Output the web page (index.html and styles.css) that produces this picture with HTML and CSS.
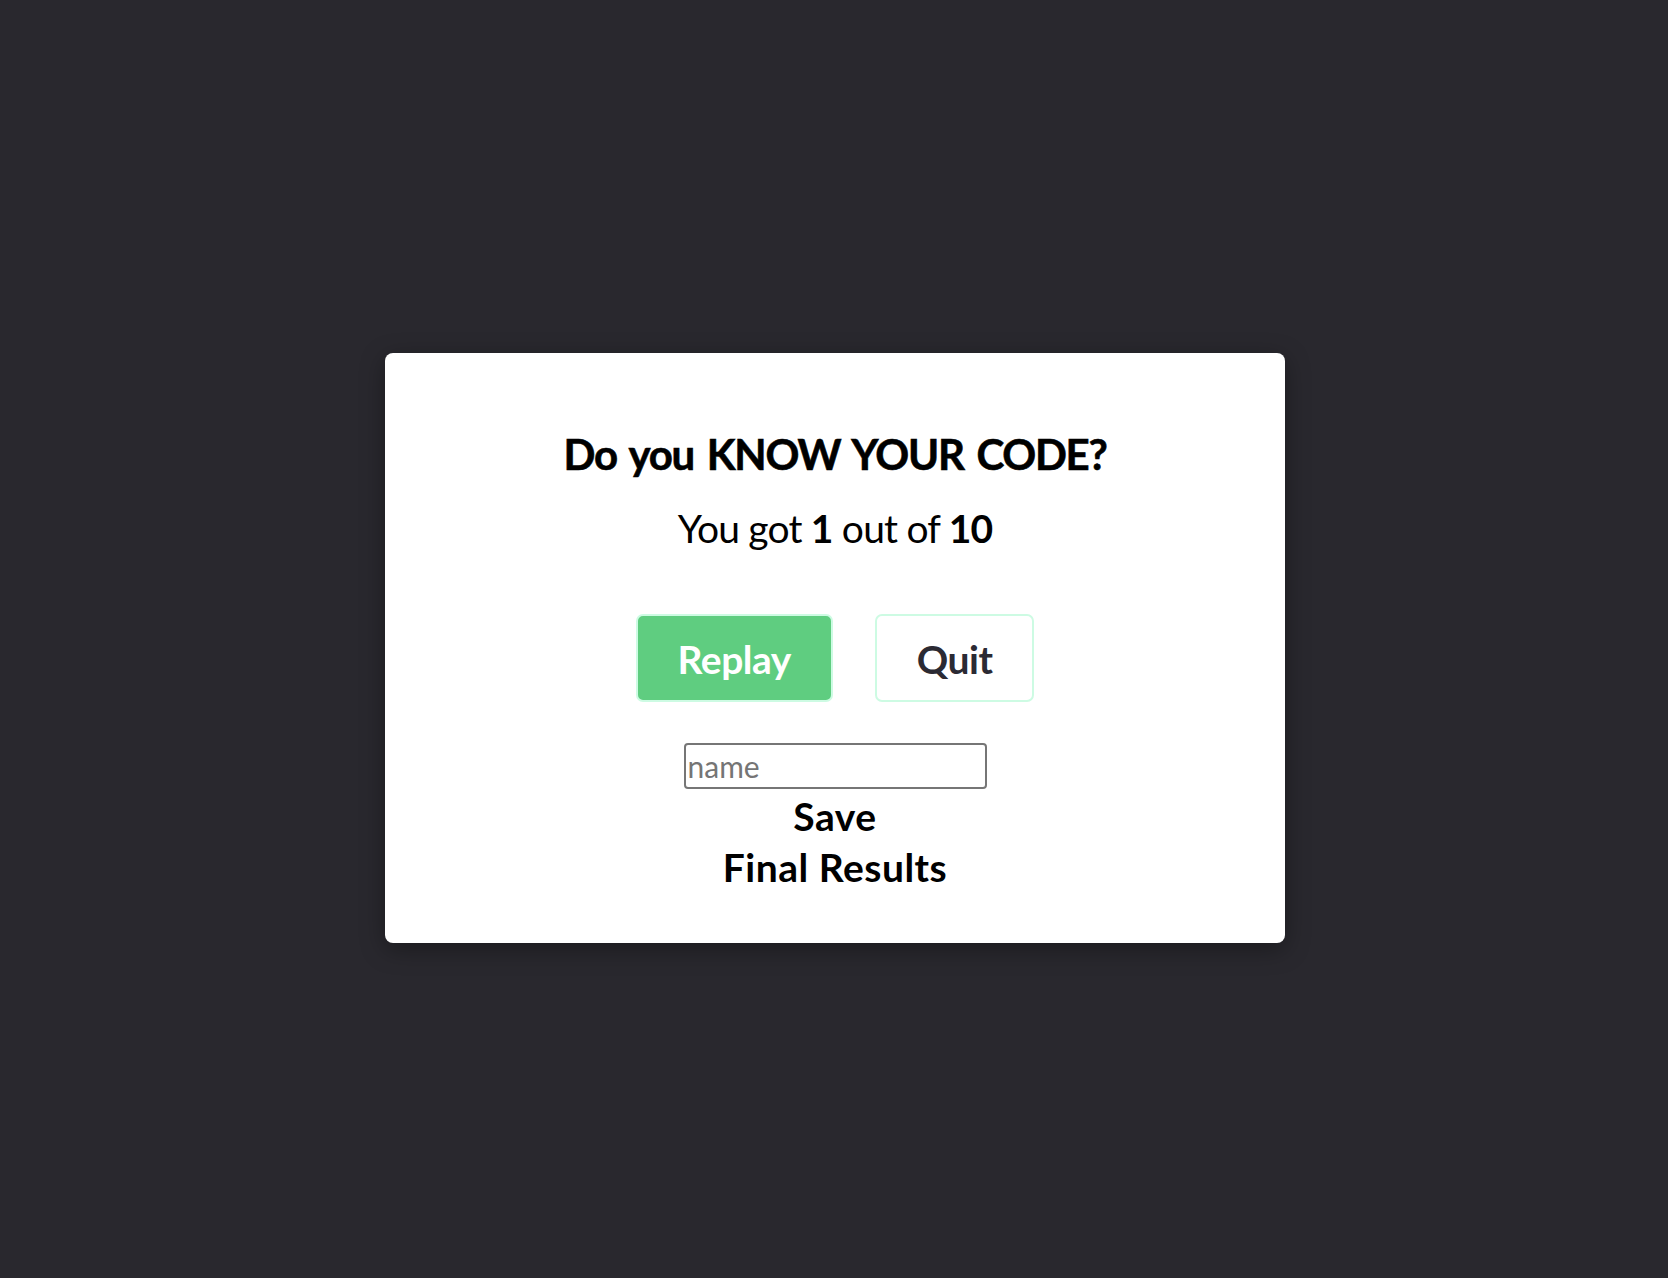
FILE: index.html
```html
<!DOCTYPE html>
<html lang="en">
<head>
<meta charset="utf-8">
<title>Do you KNOW YOUR CODE?</title>
<link rel="stylesheet" href="styles.css">
</head>
<body>
<div class="overlay">
  <div class="modal">
    <h2 class="title">Do you KNOW YOUR CODE?</h2>
    <p class="score">You got <strong>1</strong> out of <strong>10</strong></p>
    <div class="actions">
      <button class="btn btn-replay">Replay</button>
      <button class="btn btn-quit">Quit</button>
    </div>
    <form class="save-form">
      <input class="name-input" type="text" placeholder="name">
      <button class="save-btn" type="button">Save</button>
    </form>
    <h3 class="final">Final Results</h3>
  </div>
</div>
</body>
</html>
```
FILE: styles.css
```css
* { box-sizing: border-box; }
html, body {
  margin: 0;
  height: 100%;
}
body {
  background: #29282e;
  font-family: Lato, "Noto Sans", sans-serif;
  color: #000;
}
.overlay {
  min-height: 100%;
  display: flex;
  justify-content: center;
  align-items: flex-start;
  padding: 353px 0 0 2px;
}
.modal {
  width: 900px;
  height: 590px;
  background: #fff;
  border-radius: 8px;
  box-shadow: 0 6px 24px rgba(0, 0, 0, 0.35);
  display: flex;
  flex-direction: column;
  align-items: center;
  padding-top: 75px;
}
.title {
  margin: 0;
  font-size: 42px;
  line-height: 53px;
  font-weight: 700;
  letter-spacing: -1.3px;
  word-spacing: 4px;
  -webkit-text-stroke: 0.6px #000;
}
.score {
  margin: 23px 0 0;
  font-size: 39px;
  line-height: 48px;
  font-weight: 400;
  letter-spacing: -0.8px;
}
.score strong { font-weight: 700; }
.actions {
  display: flex;
  gap: 42px;
  margin-top: 62px;
}
.btn {
  height: 88px;
  padding: 2px 40px 0;
  border: 2px solid #cdfbe3;
  border-radius: 7px;
  font-family: inherit;
  font-size: 39px;
  line-height: 82px;
  font-weight: 700;
  letter-spacing: -0.5px;
  cursor: pointer;
}
.btn-replay {
  background: #5fcd80;
  color: #fff;
}
.btn-quit {
  background: #fff;
  color: #2b2a33;
}
.save-form {
  display: flex;
  flex-direction: column;
  align-items: center;
  margin-top: 41px;
}
.name-input {
  width: 303px;
  height: 46px;
  border: 2px solid #767676;
  border-radius: 4px;
  padding: 0 2px;
  font-family: inherit;
  font-size: 30px;
  color: #000;
}
.name-input::placeholder { color: #757575; }
.save-btn {
  margin-top: 2px;
  background: none;
  border: none;
  padding: 0;
  font-family: inherit;
  font-size: 39px;
  line-height: 51px;
  font-weight: 700;
  color: #000;
  letter-spacing: 0.5px;
}
.final {
  margin: 0;
  font-size: 39px;
  line-height: 51px;
  font-weight: 700;
  letter-spacing: 0.5px;
}
```
